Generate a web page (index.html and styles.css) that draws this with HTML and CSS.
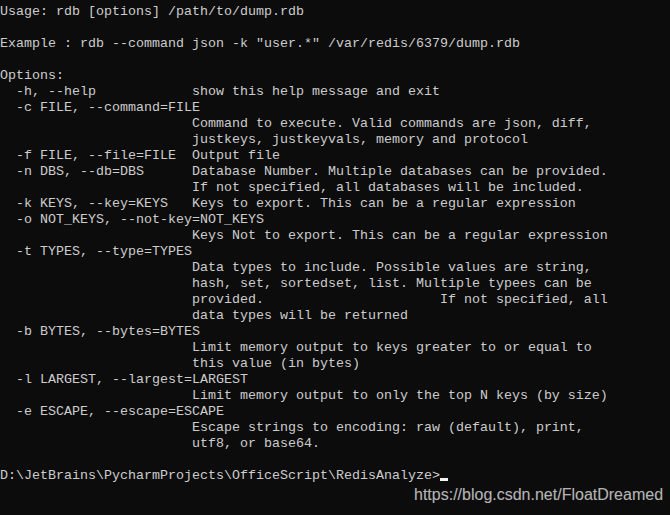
FILE: index.html
```html
<!DOCTYPE html>
<html>
<head>
<meta charset="utf-8">
<link rel="stylesheet" href="styles.css">
</head>
<body>
<div class="console">
<pre class="out">Usage: rdb [options] /path/to/dump.rdb

Example : rdb --command json -k "user.*" /var/redis/6379/dump.rdb

Options:
  -h, --help            show this help message and exit
  -c FILE, --command=FILE
                        Command to execute. Valid commands are json, diff,
                        justkeys, justkeyvals, memory and protocol
  -f FILE, --file=FILE  Output file
  -n DBS, --db=DBS      Database Number. Multiple databases can be provided.
                        If not specified, all databases will be included.
  -k KEYS, --key=KEYS   Keys to export. This can be a regular expression
  -o NOT_KEYS, --not-key=NOT_KEYS
                        Keys Not to export. This can be a regular expression
  -t TYPES, --type=TYPES
                        Data types to include. Possible values are string,
                        hash, set, sortedset, list. Multiple typees can be
                        provided.                      If not specified, all
                        data types will be returned
  -b BYTES, --bytes=BYTES
                        Limit memory output to keys greater to or equal to
                        this value (in bytes)
  -l LARGEST, --largest=LARGEST
                        Limit memory output to only the top N keys (by size)
  -e ESCAPE, --escape=ESCAPE
                        Escape strings to encoding: raw (default), print,
                        utf8, or base64.

D:\JetBrains\PycharmProjects\OfficeScript\RedisAnalyze&gt;<span class="cursor"></span></pre>
<div class="watermark">https://blog.csdn.net/FloatDreamed</div>
</div>
</body>
</html>
```

FILE: styles.css
```css
html, body {
  margin: 0;
  padding: 0;
  background: #0c0c0c;
}
.console {
  position: relative;
  width: 670px;
  height: 515px;
  overflow: hidden;
  background: #0c0c0c;
}
.out {
  margin: 0;
  padding: 4px 0 0 0;
  font-family: "Liberation Mono", "DejaVu Sans Mono", monospace;
  font-size: 13.333px;
  line-height: 16px;
  color: #cccccc;
  white-space: pre;
}
.cursor {
  display: inline-block;
  width: 8px;
  height: 3px;
  background: #f2f2f2;
  vertical-align: -2px;
}
.watermark {
  position: absolute;
  left: 414px;
  top: 485px;
  font-family: "Liberation Sans", Arial, sans-serif;
  font-size: 16px;
  line-height: 20px;
  color: #b4b4b4;
  text-shadow: 0 0 1px #333;
}
```
